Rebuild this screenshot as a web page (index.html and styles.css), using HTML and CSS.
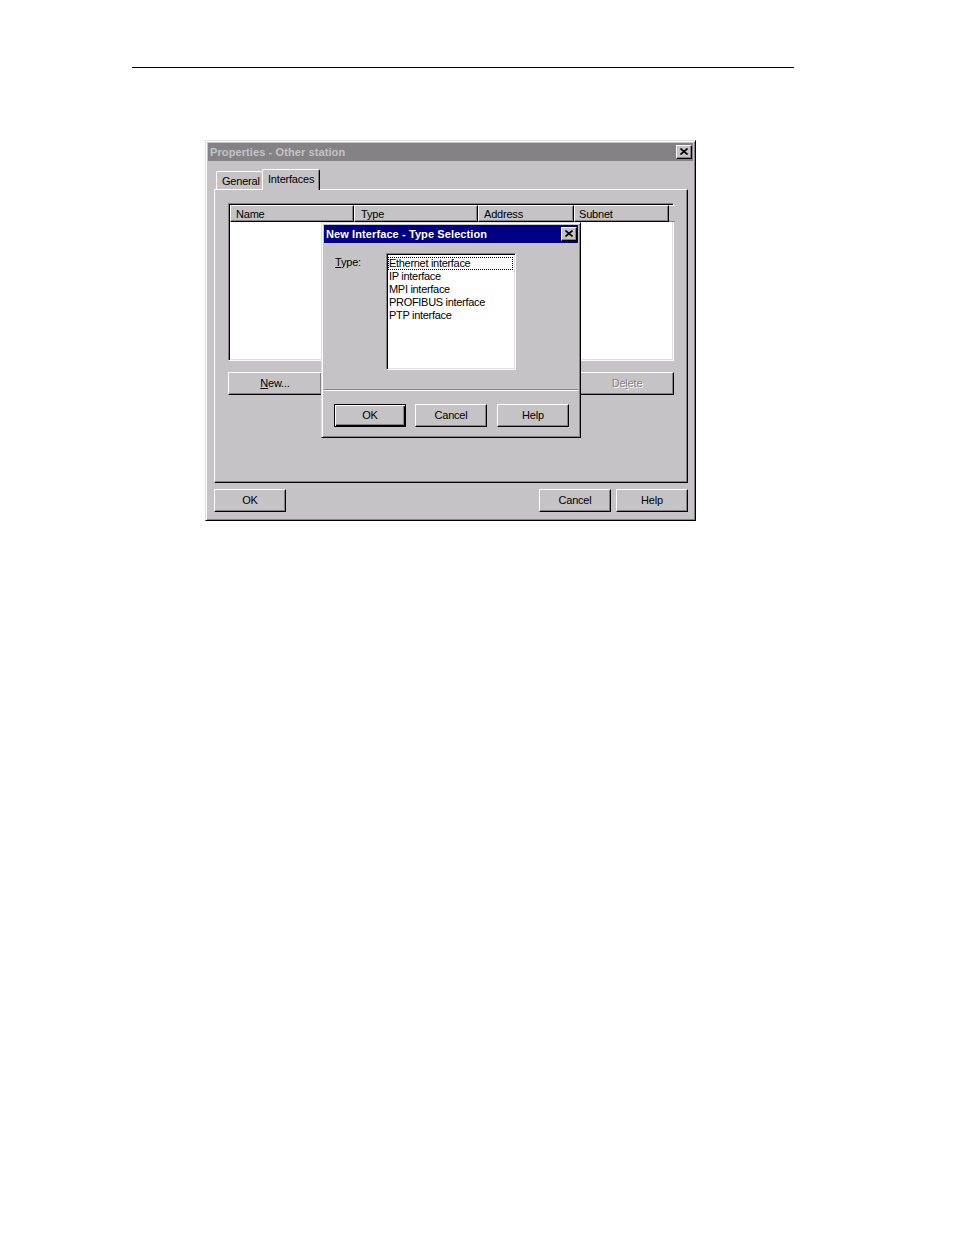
FILE: index.html
```html
<!DOCTYPE html>
<html>
<head>
<meta charset="utf-8">
<link rel="stylesheet" href="styles.css">
</head>
<body>
<div class="rule"></div>
<div class="win">
  <div class="titlebar inactive">
    <span class="title">Properties - Other station</span>
    <span class="xbtn"><svg width="8" height="7" viewBox="0 0 8 7"><path d="M0.5 0.5 L7.5 6.5 M7.5 0.5 L0.5 6.5" stroke="#000" stroke-width="1.6" fill="none"/></svg></span>
  </div>
  <div class="body">
    <div class="tabs">
      <div class="tab">General</div>
      <div class="tab sel">Interfaces</div>
    </div>
    <div class="panel">
      <div class="listview">
        <div class="lvhead">
          <div class="col c1">Name</div>
          <div class="col c2">Type</div>
          <div class="col c3">Address</div>
          <div class="col c4">Subnet</div>
          <div class="col c5"></div>
        </div>
      </div>
      <div class="rowbtns">
        <div class="btn wide"><span><u>N</u>ew...</span></div>
        <div class="btn wide disabled"><span>De<u>l</u>ete</span></div>
      </div>
    </div>
    <div class="bottombtns">
      <div class="btn">OK</div>
      <div class="spacer"></div>
      <div class="btn">Cancel</div>
      <div class="btn">Help</div>
    </div>
  </div>

  <div class="popup">
    <div class="titlebar active">
      <span class="title">New Interface - Type Selection</span>
      <span class="xbtn"><svg width="8" height="7" viewBox="0 0 8 7"><path d="M0.5 0.5 L7.5 6.5 M7.5 0.5 L0.5 6.5" stroke="#000" stroke-width="1.6" fill="none"/></svg></span>
    </div>
    <div class="pbody">
      <div class="prow">
        <div class="plabel"><u>T</u>ype:</div>
        <div class="listbox">
          <div class="item focus">Ethernet interface</div>
          <div class="item">IP interface</div>
          <div class="item">MPI interface</div>
          <div class="item">PROFIBUS interface</div>
          <div class="item">PTP interface</div>
        </div>
      </div>
      <div class="sep"></div>
      <div class="pbtns">
        <div class="btn default">OK</div>
        <div class="btn">Cancel</div>
        <div class="btn help">Help</div>
      </div>
    </div>
  </div>
</div>
</body>
</html>
```

FILE: styles.css
```css
* { box-sizing: border-box; }
body {
  margin: 0;
  background: #fff;
  font-family: "Liberation Sans", Arial, sans-serif;
  font-size: 11px;
  color: #000;
}
.rule {
  margin: 67px 0 0 132px;
  width: 662px;
  height: 1px;
  background: #000;
}
.win {
  position: relative;
  margin: 72px 0 0 205px;
  width: 491px;
  height: 381px;
  background: #c5c3c6;
  border: 1px solid;
  border-color: #dfdfdf #000 #000 #dfdfdf;
  box-shadow: inset 1px 1px #fff, inset -1px -1px #848284;
  padding: 2px;
  display: flex;
  flex-direction: column;
}
.titlebar {
  height: 18px;
  display: flex;
  align-items: center;
  justify-content: space-between;
  padding: 0 1px 0 2px;
  flex-shrink: 0;
}
.titlebar.inactive { background: #848284; color: #c5c3c6; }
.titlebar.active { background: #000084; color: #fff; }
.title {
  font-weight: bold;
  font-size: 11px;
  line-height: 18px;
  letter-spacing: 0.1px;
}
.xbtn {
  width: 16px;
  height: 14px;
  background: #c5c3c6;
  border: 1px solid;
  border-color: #fff #000 #000 #fff;
  box-shadow: inset -1px -1px #848284;
  display: flex;
  align-items: center;
  justify-content: center;
  padding-bottom: 1px;
}
.xbtn svg { display: block; }
.body {
  flex: 1;
  display: flex;
  flex-direction: column;
  padding: 8px 5px 0 6px;
}
.tabs {
  display: flex;
  align-items: flex-end;
  height: 20px;
  padding-left: 2px;
  position: relative;
  z-index: 1;
}
.tab {
  height: 18px;
  padding: 3px 0 0 5px;
  letter-spacing: -0.2px;
  border: 1px solid;
  border-bottom: none;
  border-color: #fff #000 #000 #fff;
  border-radius: 2px 2px 0 0;
  box-shadow: inset -1px 0 #848284;
  background: #c5c3c6;
}
.tab:first-child { width: 46px; border-right: none; box-shadow: none; }
.tab.sel {
  width: 58px;
  height: 21px;
  margin-bottom: -1px;
  padding-top: 3px;
}
.panel {
  height: 294px;
  border: 1px solid;
  border-color: #fff #000 #000 #fff;
  box-shadow: inset -1px -1px #848284;
  padding: 13px 13px 0 13px;
  display: flex;
  flex-direction: column;
}
.listview {
  height: 158px;
  background: #fff;
  border: 1px solid;
  border-color: #848284 #fff #fff #848284;
  box-shadow: inset 1px 1px #000, inset -1px -1px #dfdfdf;
  padding: 1px;
}
.lvhead {
  display: flex;
  height: 17px;
}
.col {
  height: 17px;
  background: #c5c3c6;
  border: 1px solid;
  border-color: #fff #000 #000 #fff;
  box-shadow: inset -1px -1px #848284;
  padding: 2px 0 0 6px;
  letter-spacing: -0.2px;
  line-height: 12px;
  flex-shrink: 0;
}
.c1 { width: 124px; padding-left: 5px; }
.c2 { width: 124px; }
.c3 { width: 96px; padding-left: 5px; }
.c4 { width: 95px; padding-left: 4px; }
.c5 {
  flex: 1;
  flex-shrink: 1;
  border: none;
  box-shadow: inset 0 1px #fff, inset 0 -1px #848284;
}
.rowbtns {
  margin-top: 11px;
  display: flex;
  justify-content: space-between;
}
.btn {
  width: 72px;
  height: 23px;
  background: #c5c3c6;
  border: 1px solid;
  border-color: #fff #000 #000 #fff;
  box-shadow: inset -1px -1px #848284;
  display: flex;
  align-items: center;
  justify-content: center;
  letter-spacing: -0.2px;
  padding-bottom: 1px;
}
.btn.wide { width: 94px; }
.btn.disabled { color: #848284; text-shadow: 1px 1px #fff; }
.btn.default {
  border: 1px solid #000;
  box-shadow: inset 1px 1px #fff, inset -1px -1px #000, inset -2px -2px #848284;
}
.bottombtns {
  margin-top: 6px;
  display: flex;
  gap: 5px;
}
.spacer { flex: 1; }
.popup {
  position: absolute;
  left: 115px;
  top: 81px;
  width: 260px;
  height: 216px;
  background: #c5c3c6;
  border: 1px solid;
  border-color: #dfdfdf #000 #000 #dfdfdf;
  box-shadow: inset 1px 1px #fff, inset -1px -1px #848284;
  padding: 2px;
  display: flex;
  flex-direction: column;
  z-index: 5;
}
.pbody {
  padding-top: 10px;
  display: flex;
  flex-direction: column;
}
.prow {
  display: flex;
  padding-left: 11px;
}
.plabel {
  width: 51px;
  padding-top: 3px;
  letter-spacing: -0.2px;
}
.listbox {
  width: 130px;
  height: 117px;
  background: #fff;
  border: 1px solid;
  border-color: #848284 #fff #fff #848284;
  box-shadow: inset 1px 1px #000, inset -1px -1px #dfdfdf;
  padding: 3px 2px 2px 1px;
}
.item {
  height: 13px;
  line-height: 13px;
  padding-left: 1px;
  letter-spacing: -0.3px;
  white-space: nowrap;
}
.item.focus { outline: 1px dotted #000; outline-offset: -1px; }
.sep {
  margin-top: 19px;
  height: 2px;
  border-top: 1px solid #848284;
  border-bottom: 1px solid #fff;
}
.pbtns {
  margin-top: 13px;
  padding-left: 10px;
  display: flex;
  gap: 9px;
}
.btn.help { margin-left: 1px; }
```
